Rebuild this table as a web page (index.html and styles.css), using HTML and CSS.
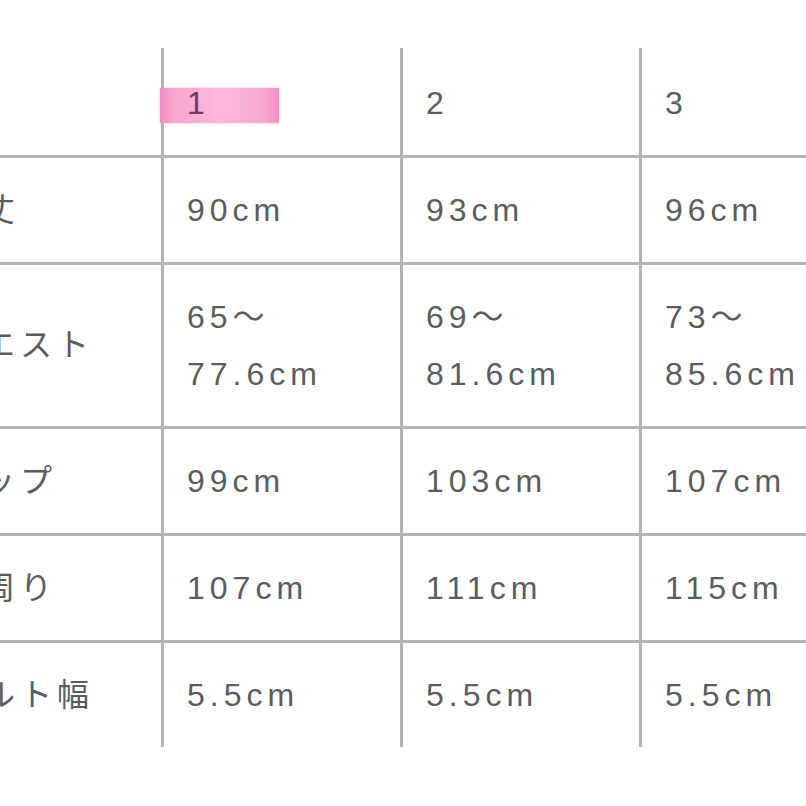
FILE: index.html
```html
<!DOCTYPE html>
<html lang="ja">
<head>
<meta charset="utf-8">
<link rel="stylesheet" href="styles.css">
</head>
<body>
<div class="page">
  <table class="size-table">
    <colgroup>
      <col class="col-label">
      <col class="col-size">
      <col class="col-size">
      <col class="col-size">
    </colgroup>
    <tr class="head">
      <td class="cell label"></td>
      <td class="cell"><span class="marker">1</span></td>
      <td class="cell">2</td>
      <td class="cell">3</td>
    </tr>
    <tr>
      <td class="cell label">総丈</td>
      <td class="cell">90cm</td>
      <td class="cell">93cm</td>
      <td class="cell">96cm</td>
    </tr>
    <tr>
      <td class="cell label">ウエスト</td>
      <td class="cell">65〜<br>77.6cm</td>
      <td class="cell">69〜<br>81.6cm</td>
      <td class="cell">73〜<br>85.6cm</td>
    </tr>
    <tr>
      <td class="cell label">ヒップ</td>
      <td class="cell">99cm</td>
      <td class="cell">103cm</td>
      <td class="cell">107cm</td>
    </tr>
    <tr>
      <td class="cell label">裾周り</td>
      <td class="cell">107cm</td>
      <td class="cell">111cm</td>
      <td class="cell">115cm</td>
    </tr>
    <tr>
      <td class="cell label">ベルト幅</td>
      <td class="cell">5.5cm</td>
      <td class="cell">5.5cm</td>
      <td class="cell">5.5cm</td>
    </tr>
  </table>
</div>
</body>
</html>
```

FILE: styles.css
```css
html, body {
  margin: 0;
  padding: 0;
  background: #ffffff;
  overflow: hidden;
}

.page {
  padding-top: 48px;
  width: 806px;
  height: 806px;
  box-sizing: border-box;
  overflow: hidden;
}

.size-table {
  margin-left: -79px;
  border-collapse: separate;
  border-spacing: 0;
  table-layout: fixed;
  width: 957px;
  font-family: "Liberation Sans", "Noto Sans CJK JP", sans-serif;
  font-size: 32px;
  letter-spacing: 5px;
  color: #5c5c5c;
}

.col-label { width: 240px; }
.col-size { width: 239px; }

.cell {
  padding: 23.5px 10px 23.5px 23px;
  line-height: 57px;
  vertical-align: middle;
  text-align: left;
  border-top: 3px solid #b3b3b3;
  border-left: 3px solid #b3b3b3;
  white-space: nowrap;
}

.cell.label {
  border-left: none;
  padding-left: 25px;
}

.head .cell {
  border-top: none;
  padding-top: 26.5px;
}

.marker {
  display: inline-block;
  box-sizing: border-box;
  width: 119px;
  margin-left: -27px;
  padding-left: 27px;
  line-height: 30px;
  padding-bottom: 5px;
  color: #6e3d58;
  background: linear-gradient(90deg, #f48cc1 0%, #f8a6cf 12%, #fbb8da 50%, #f9abd2 85%, #f48fc3 100%);
  box-shadow: 0 0 2px rgba(244, 140, 193, 0.6);
}
```
